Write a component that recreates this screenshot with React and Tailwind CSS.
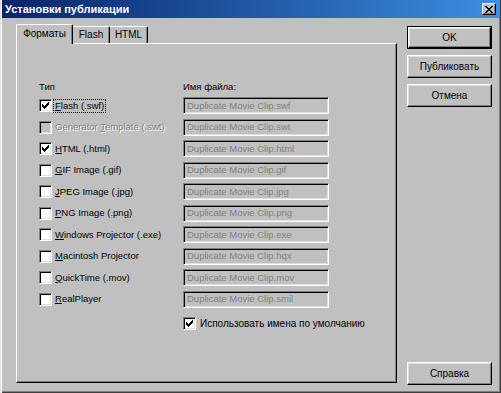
import React from 'react'

const CHECK = [
  [6, 0], [5, 1], [6, 1], [0, 2], [4, 2], [5, 2], [6, 2],
  [0, 3], [1, 3], [3, 3], [4, 3], [5, 3],
  [0, 4], [1, 4], [2, 4], [3, 4], [4, 4],
  [1, 5], [2, 5], [3, 5], [2, 6],
]

const rows = [
  { pre: '', u: 'F', rest: 'lash (.swf)', checked: true, focus: true, file: 'Duplicate Movie Clip.swf' },
  { pre: 'Generator ', u: 'T', rest: 'emplate (.swt)', disabled: true, file: 'Duplicate Movie Clip.swt' },
  { pre: '', u: 'H', rest: 'TML (.html)', checked: true, file: 'Duplicate Movie Clip.html' },
  { pre: '', u: 'G', rest: 'IF Image (.gif)', file: 'Duplicate Movie Clip.gif' },
  { pre: '', u: 'J', rest: 'PEG Image (.jpg)', file: 'Duplicate Movie Clip.jpg' },
  { pre: '', u: 'P', rest: 'NG Image (.png)', file: 'Duplicate Movie Clip.png' },
  { pre: '', u: 'W', rest: 'indows Projector (.exe)', file: 'Duplicate Movie Clip.exe' },
  { pre: '', u: 'M', rest: 'acintosh Projector', file: 'Duplicate Movie Clip.hqx' },
  { pre: '', u: 'Q', rest: 'uickTime (.mov)', file: 'Duplicate Movie Clip.mov' },
  { pre: '', u: 'R', rest: 'ealPlayer', file: 'Duplicate Movie Clip.smil' },
]

function Box({ checked, disabled }) {
  return (
    <span
      className={`w-[13px] h-[13px] shrink-0 flex items-center justify-center border border-t-[#808080] border-l-[#808080] border-b-white border-r-white shadow-[inset_1px_1px_0_#000,inset_-1px_-1px_0_#dfdfdf] ${disabled ? 'bg-[#c0c0c0]' : 'bg-white'}`}
    >
      {checked && (
        <svg width="7" height="7" viewBox="0 0 7 7" shapeRendering="crispEdges">
          {CHECK.map(([x, y]) => (
            <rect key={`${x}-${y}`} x={x} y={y} width="1" height="1" fill="#000" />
          ))}
        </svg>
      )}
    </span>
  )
}

function Btn({ children, def }) {
  const face = (
    <div className="w-full h-full flex items-center justify-center bg-[#c0c0c0] border border-t-white border-l-white border-b-black border-r-black shadow-[inset_-1px_-1px_0_#808080,inset_1px_1px_0_#dfdfdf]">
      {children}
    </div>
  )
  return (
    <div className={`w-[85px] h-[23px] shrink-0 ${def ? 'border border-black' : ''}`}>{face}</div>
  )
}

export default function App() {
  return (
    <div className="w-[501px] h-[393px] bg-[#c0c0c0] flex flex-col px-[2px] pb-[2px] text-[10px] leading-[12px] text-black font-['Liberation_Sans',Arial,sans-serif] shadow-[inset_1px_0_0_#dfdfdf,inset_2px_0_0_#fff,inset_-1px_-1px_0_#404040,inset_-2px_-2px_0_#808080]">
      {/* Title bar */}
      <div className="h-[18px] shrink-0 flex items-center justify-between pl-[3px] pr-[3px] bg-gradient-to-r from-[#0a246a] to-[#3d8ee2]">
        <span className="text-white font-bold text-[11px] leading-[13px]">Установки публикации</span>
        <span className="w-[14px] h-[12px] flex items-center justify-center bg-[#c0c0c0] border border-t-white border-l-white border-b-black border-r-black shadow-[inset_-1px_-1px_0_#808080]">
          <svg width="8" height="7" viewBox="0 0 8 7" shapeRendering="crispEdges">
            <path d="M0 0h2v1h1v1h2V1h1V0h2v1H7v1H6v1H5v1h1v1h1v1h1v1H6V6H5V5H3v1H2v1H0V6h1V5h1V4h1V3H2V2H1V1H0z" fill="#000" />
          </svg>
        </span>
      </div>

      {/* Body */}
      <div className="flex-1 flex pt-[6px] pl-[14px]">
        {/* Tab control */}
        <div className="w-[381px] flex flex-col">
          <div className="h-[19px] flex items-end relative z-10">
            <div className="w-[57px] h-[20px] -mb-[1px] bg-[#c0c0c0] flex items-center justify-center pb-[2px] border-t border-l border-r border-t-white border-l-white border-r-black shadow-[inset_-1px_0_0_#808080] rounded-t-[2px]">
              Форматы
            </div>
            <div className="w-[37px] h-[17px] flex items-center justify-center border-t border-r border-t-white border-r-black shadow-[inset_-1px_0_0_#808080] rounded-tr-[2px]">
              Flash
            </div>
            <div className="w-[38px] h-[17px] flex items-center justify-center border-t border-r border-t-white border-r-black shadow-[inset_-1px_0_0_#808080] rounded-tr-[2px]">
              HTML
            </div>
          </div>
          <div className="h-[340px] border border-t-white border-l-white border-b-black border-r-black shadow-[inset_-1px_-1px_0_#808080] pl-[22px] pt-[37px] text-[9.5px]">
            <div className="flex h-[14px]">
              <div className="w-[144px]">Тип</div>
              <div>Имя файла:</div>
            </div>
            {rows.map((r) => (
              <div key={r.file} className="flex items-center h-[21.5px]">
                <div className="w-[144px] flex items-center">
                  <Box checked={r.checked} disabled={r.disabled} />
                  <span
                    className={`ml-[1px] px-[1px] border leading-[12px] ${r.focus ? 'border-dotted border-black' : 'border-transparent'} ${r.disabled ? 'text-[#808080] [text-shadow:1px_1px_0_#fff]' : ''}`}
                  >
                    {r.pre}
                    <span className="underline underline-offset-1">{r.u}</span>
                    {r.rest}
                  </span>
                </div>
                <div className="w-[146px] h-[17px] pl-[3px] flex items-center text-[#808080] border border-t-[#808080] border-l-[#808080] border-b-white border-r-white shadow-[inset_1px_1px_0_#000,inset_-1px_-1px_0_#dfdfdf] overflow-hidden whitespace-nowrap">
                  {r.file}
                </div>
              </div>
            ))}
            <div className="flex items-center h-[19px] mt-[4px] pl-[144px]">
              <Box checked />
              <span className="ml-[4px] text-[10px]">Использовать имена по умолчанию</span>
            </div>
          </div>
        </div>

        {/* Buttons */}
        <div className="ml-[10px] flex flex-col pt-[2px] pb-[6px]">
          <Btn def>OK</Btn>
          <div className="h-[6px]" />
          <Btn>Публиковать</Btn>
          <div className="h-[6px]" />
          <Btn>Отмена</Btn>
          <div className="flex-1" />
          <Btn>Справка</Btn>
        </div>
      </div>
    </div>
  )
}
